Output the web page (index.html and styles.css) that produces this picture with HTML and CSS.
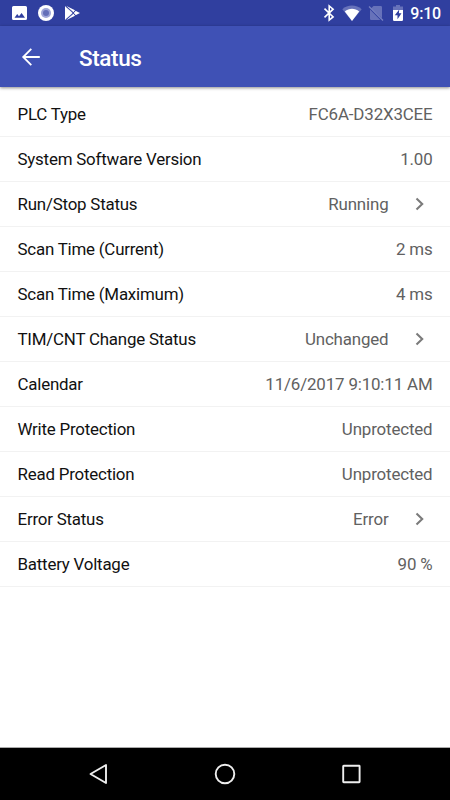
FILE: index.html
```html
<!DOCTYPE html>
<html lang="en">
<head>
  <meta charset="UTF-8">
  <title>Status</title>
  <link rel="stylesheet" href="styles.css">
</head>
<body>
  <div class="statusbar">
    <svg class="notifications" width="90" height="26" viewBox="0 0 90 26">
      <path fill="#fff" fill-rule="evenodd" d="M13.500 6h12a1.500 1.500 0 0 1 1.500 1.500v11a1.500 1.500 0 0 1-1.500 1.500h-12a1.500 1.500 0 0 1-1.500-1.500v-11A1.500 1.500 0 0 1 13.500 6zM14.500 17.700h10.500l-3.400-4.600-2.600 3.200-1.800-2.200z"/>
      <circle cx="46" cy="13" r="8" fill="#fff"/>
      <circle cx="46" cy="13" r="5" fill="#9fa6d8"/>
      <circle cx="46" cy="13" r="3" fill="#646fb8"/>
      <path fill="#fff" d="M65 6l8.500 7L65 20zM66 5.800l9 4.500-1.500 2zM66 20.200l9-4.500-1.500-2zM75.500 10.700l4.500 2.300-4.500 2.300-1.800-2.300z"/>
      <path fill="none" stroke="#303f9f" stroke-width=".8" d="M65.500 6l10.500 9.800M65.500 20L76 10.200"/>
    </svg>
    <div class="system">
      <svg width="82" height="26" viewBox="322 0 82 26">
        <path fill="none" stroke="#fff" stroke-width="1.600" d="M324.500 8.700l8.600 8.200-3.900 3.200V6l3.900 3.200-8.600 8.200"/>
        <path fill="#6772ba" d="M342.300 9.200C347.500 4.200 356.300 4.200 361.700 9.200L352 21z"/>
        <path fill="#fff" d="M344.800 11.400C349 7.800 355 7.800 359.200 11.400L352 21z"/>
        <path fill="#6772ba" d="M373.500 6h7.300a1.200 1.200 0 0 1 1.200 1.200v11L371 8.500zM370 9.500L380.300 20H371.200a1.200 1.200 0 0 1-1.200-1.200z"/>
        <path fill="none" stroke="#7781c2" stroke-width="1.200" d="M369 6.500l14 14"/>
        <path fill="#6772ba" d="M396 5h4v1.500h3V10h-10V6.500h3z"/>
        <path fill="#fff" d="M393 10h10v9.800a1.200 1.200 0 0 1-1.200 1.200h-7.600a1.200 1.200 0 0 1-1.200-1.200z"/>
        <path fill="#303f9f" d="M399.200 9.500l-4.400 5.800h2.700v4l4-6h-2.600z"/>
      </svg>
      <span class="clock">9:10</span>
    </div>
  </div>

  <header class="appbar">
    <svg class="back" width="20" height="20" viewBox="0 0 20 20">
      <path fill="none" stroke="#fff" stroke-width="1.800" d="M18.800 10H2.500M10.300 1.800L2.200 10l8.100 8.200"/>
    </svg>
    <h1>Status</h1>
  </header>

  <main class="list">
    <div class="row"><span class="label">PLC Type</span><span class="value">FC6A-D32X3CEE</span></div>
    <div class="row"><span class="label">System Software Version</span><span class="value">1.00</span></div>
    <div class="row">
      <span class="label">Run/Stop Status</span><span class="value">Running</span>
      <svg class="chevron" width="10" height="14" viewBox="0 0 10 14"><path d="M1.500 1.600L7.200 7l-5.700 5.400"/></svg>
    </div>
    <div class="row"><span class="label">Scan Time (Current)</span><span class="value">2 ms</span></div>
    <div class="row"><span class="label">Scan Time (Maximum)</span><span class="value">4 ms</span></div>
    <div class="row">
      <span class="label">TIM/CNT Change Status</span><span class="value">Unchanged</span>
      <svg class="chevron" width="10" height="14" viewBox="0 0 10 14"><path d="M1.500 1.600L7.200 7l-5.700 5.400"/></svg>
    </div>
    <div class="row"><span class="label">Calendar</span><span class="value">11/6/2017 9:10:11 AM</span></div>
    <div class="row"><span class="label">Write Protection</span><span class="value">Unprotected</span></div>
    <div class="row"><span class="label">Read Protection</span><span class="value">Unprotected</span></div>
    <div class="row">
      <span class="label">Error Status</span><span class="value">Error</span>
      <svg class="chevron" width="10" height="14" viewBox="0 0 10 14"><path d="M1.500 1.600L7.200 7l-5.700 5.400"/></svg>
    </div>
    <div class="row"><span class="label">Battery Voltage</span><span class="value">90 %</span></div>
  </main>

  <nav class="navbar">
    <svg width="22" height="22" viewBox="0 0 22 22"><path d="M19 2v18L3.500 11z"/></svg>
    <svg width="22" height="22" viewBox="0 0 22 22"><circle cx="11" cy="11" r="9.300"/></svg>
    <svg width="22" height="22" viewBox="0 0 22 22"><rect x="3.200" y="2.800" width="16.400" height="16.400" rx=".5"/></svg>
  </nav>
</body>
</html>
```
FILE: styles.css
```css
* {
  box-sizing: border-box;
}
body {
  margin: 0;
  height: 800px;
  display: flex;
  flex-direction: column;
  overflow: hidden;
  background: #fff;
  font-family: Roboto, sans-serif;
}
svg {
  display: block;
  flex: none;
}
.statusbar {
  height: 26px;
  flex: none;
  display: flex;
  justify-content: space-between;
  background: #303f9f;
}
.system {
  display: flex;
  align-items: center;
  padding-right: 9px;
}
.clock {
  width: 37px;
  text-align: right;
  white-space: nowrap;
  margin-top: 2px;
  color: #fff;
  font-size: 16px;
  font-weight: 500;
  letter-spacing: -0.2px;
  line-height: 24px;
}
.appbar {
  height: 61px;
  flex: none;
  display: flex;
  align-items: center;
  padding-left: 21px;
  background: #3f51b5;
  box-shadow: 0 1px 3px rgba(0, 0, 0, 0.45);
}
.appbar h1 {
  margin: 2px 0 0 38px;
  color: #fff;
  font-size: 22.5px;
  font-weight: 500;
  letter-spacing: -0.4px;
}
.list {
  flex: 1;
  padding-top: 5px;
}
.row {
  height: 45px;
  display: flex;
  align-items: center;
  padding: 0 17.5px 0 17px;
  border-bottom: 1px solid #f2f2f2;
  font-size: 16.9px;
}
.label {
  flex: 1;
  padding-left: 0.5px;
  color: #111;
  letter-spacing: -0.21px;
}
.value {
  color: #616161;
  letter-spacing: -0.15px;
}
.chevron {
  margin: 0 7.5px 0 26.5px;
}
.chevron path {
  fill: none;
  stroke: #7b7b7b;
  stroke-width: 2.1;
}
.navbar {
  height: 53px;
  flex: none;
  display: flex;
  justify-content: space-between;
  align-items: center;
  padding: 0 88px 0 87px;
  background: #000;
  border-top: 1px solid #aaa;
}
.navbar svg {
  fill: none;
  stroke: #eee;
  stroke-width: 1.9;
  stroke-linejoin: round;
}
```
